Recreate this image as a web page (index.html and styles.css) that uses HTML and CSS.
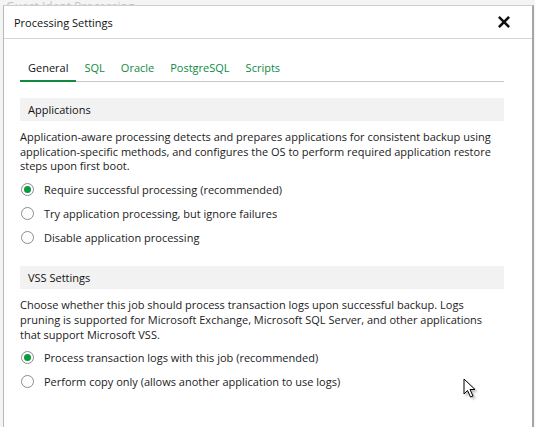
FILE: index.html
```html
<!DOCTYPE html>
<html>
<head>
<meta charset="utf-8">
<link rel="stylesheet" href="styles.css">
</head>
<body>
<div class="ghost">Guest Ident Processing</div>
<div class="dialog">
  <div class="titlebar">
    <span class="title">Processing Settings</span>
    <svg class="close" width="12" height="12" viewBox="0 0 12 12"><path d="M1.8 1.8 L10.2 10.2 M10.2 1.8 L1.8 10.2" stroke="#111" stroke-width="2.6" stroke-linecap="square"/></svg>
  </div>
  <div class="content">
    <div class="tabs">
      <span class="tab active">General</span>
      <span class="tab">SQL</span>
      <span class="tab">Oracle</span>
      <span class="tab">PostgreSQL</span>
      <span class="tab">Scripts</span>
    </div>

    <div class="section">
      <div class="section-head">Applications</div>
      <p class="desc">Application-aware processing detects and prepares applications for consistent backup using application-specific methods, and configures the OS to perform required application restore steps upon first boot.</p>
      <div class="options">
        <div class="option"><span class="radio checked"></span><span>Require successful processing (recommended)</span></div>
        <div class="option"><span class="radio"></span><span>Try application processing, but ignore failures</span></div>
        <div class="option"><span class="radio"></span><span>Disable application processing</span></div>
      </div>
    </div>

    <div class="section">
      <div class="section-head">VSS Settings</div>
      <p class="desc">Choose whether this job should process transaction logs upon successful backup. Logs pruning is supported for Microsoft Exchange, Microsoft SQL Server, and other applications that support Microsoft VSS.</p>
      <div class="options">
        <div class="option"><span class="radio checked"></span><span>Process transaction logs with this job (recommended)</span></div>
        <div class="option"><span class="radio"></span><span>Perform copy only (allows another application to use logs)</span></div>
      </div>
    </div>
  </div>
  <svg class="cursor" width="16" height="22" viewBox="0 0 16 22"><path d="M1 1 L1 16 L4.5 12.5 L7.5 19 L10 18 L7 11.5 L12 11.5 Z" fill="#fff" stroke="#000" stroke-width="1" stroke-linejoin="miter"/></svg>
</div>
</body>
</html>
```

FILE: styles.css
```css
html, body {
  margin: 0;
  padding: 0;
}
body {
  width: 535px;
  height: 427px;
  overflow: hidden;
  background: #f4f4f4;
  font-family: "Open Sans", "Noto Sans", sans-serif;
  font-size: 11px;
  color: #1b1b1b;
}
.ghost {
  height: 5px;
  overflow: hidden;
  padding-left: 6px;
  font-size: 12px;
  line-height: 14px;
  color: #c4c4c4;
}
.dialog {
  position: relative;
  margin-left: 3px;
  width: 528px;
  height: 430px;
  background: #fff;
  border-left: 1px solid #b9b9b9;
  border-top: 1px solid #cfcfcf;
  border-right: 2px solid #a6a6a6;
}
.titlebar {
  height: 32px;
  border-bottom: 1px solid #d6d6d6;
  display: flex;
  align-items: center;
  justify-content: space-between;
  padding: 0 22px 0 10px;
}
.title {
  font-size: 11px;
  color: #111;
  padding-top: 1px;
}
.close { display: block; }
.content {
  padding: 0 28px 0 16px;
}
.tabs {
  display: flex;
  margin-top: 17px;
  border-bottom: 1px solid #c8c8c8;
}
.tab {
  padding: 4px 8px 5px;
  color: #0d8a45;
  font-size: 11px;
  line-height: 15px;
  margin-bottom: -1px;
  border-bottom: 2px solid transparent;
}
.tab.active {
  color: #111;
  border-bottom-color: #0f8a3f;
}
.section { margin-top: 16px; }
.section + .section { margin-top: 17px; }
.section-head {
  background: #f2f2f2;
  height: 23px;
  line-height: 23px;
  padding-left: 8px;
  font-size: 11px;
  color: #111;
}
.desc {
  margin: 9px 0 0;
  line-height: 14.7px;
}
.options {
  margin-top: 3px;
  display: flex;
  flex-direction: column;
}
.option {
  height: 24px;
  display: flex;
  align-items: center;
  gap: 10px;
}
.radio {
  width: 13px;
  height: 13px;
  box-sizing: border-box;
  border: 1px solid #8c8c8c;
  border-radius: 50%;
  background: #fff;
  position: relative;
  flex: none;
  margin-left: 1px;
}
.radio.checked::after {
  content: "";
  position: absolute;
  left: 2px;
  top: 2px;
  width: 7px;
  height: 7px;
  border-radius: 50%;
  background: #0a9a40;
}
.cursor {
  position: absolute;
  left: 459px;
  top: 372px;
  filter: drop-shadow(2px 2px 1px rgba(0,0,0,0.25));
}
```
